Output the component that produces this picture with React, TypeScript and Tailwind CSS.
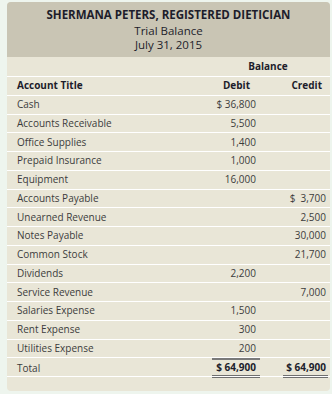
const rows: [string, string, string][] = [
  ["Cash", "$ 36,800", ""],
  ["Accounts Receivable", "5,500", ""],
  ["Office Supplies", "1,400", ""],
  ["Prepaid Insurance", "1,000", ""],
  ["Equipment", "16,000", ""],
  ["Accounts Payable", "", "$  3,700"],
  ["Unearned Revenue", "", "2,500"],
  ["Notes Payable", "", "30,000"],
  ["Common Stock", "", "21,700"],
  ["Dividends", "2,200", ""],
  ["Service Revenue", "", "7,000"],
  ["Salaries Expense", "1,500", ""],
  ["Rent Expense", "300", ""],
  ["Utilities Expense", "200", ""],
];

const grid = "grid grid-cols-[1fr_48px_45px] gap-x-[23px] pl-[10px] pr-[2px] items-center";

export default function App() {
  return (
    <div className="w-[332px] h-[394px] bg-[#eef5ee] pt-[2px] pl-[7px] pr-[2px] font-['Open_Sans',sans-serif]">
      <div className="h-[389px] rounded-[4px] overflow-hidden bg-[#e9e6d7] text-[10px] text-[#3c3c3c] whitespace-nowrap">
        <div className="h-[55px] bg-[#c9c5b4] flex flex-col items-center pt-[5px] text-[11.5px] text-[#1d1d2b]">
          <div className="font-bold leading-[16px]">SHERMANA PETERS, REGISTERED DIETICIAN</div>
          <div className="leading-[15px]">Trial Balance</div>
          <div className="leading-[13px]">July 31, 2015</div>
        </div>
        <div className={`${grid} h-[20px] border-b border-white font-bold text-[#1d1d2b]`}>
          <div />
          <div className="col-span-2 text-center pr-[4px]">Balance</div>
        </div>
        <div className={`${grid} h-[18.75px] border-b border-white font-bold text-[#1d1d2b]`}>
          <div>Account Title</div>
          <div className="text-right pr-[10px]">Debit</div>
          <div className="text-right pr-[6px]">Credit</div>
        </div>
        {rows.map(([name, debit, credit]) => (
          <div key={name} className={`${grid} h-[18.75px] border-b border-white`}>
            <div>{name}</div>
            <div className="text-right pr-[4px] whitespace-pre">{debit}</div>
            <div className="text-right pr-[2px] whitespace-pre">{credit}</div>
          </div>
        ))}
        <div className={`${grid} h-[18.75px] border-b border-white items-stretch`}>
          <div className="flex items-center">Total</div>
          <div className="flex flex-col">
            <div className="h-[2px] bg-[#7a7a7a]" />
            <div className="flex-1 flex items-center justify-end pr-[4px] font-bold text-[#1d1d2b]">$ 64,900</div>
            <div className="h-[1px] bg-[#6f6f6f] mb-[1px]" />
            <div className="h-[1px] bg-[#6f6f6f]" />
          </div>
          <div className="flex flex-col">
            <div className="h-[2px] bg-transparent" />
            <div className="flex-1 flex items-center justify-end pr-[2px] font-bold text-[#1d1d2b]">$ 64,900</div>
            <div className="h-[1px] bg-[#6f6f6f] mb-[1px]" />
            <div className="h-[1px] bg-[#6f6f6f]" />
          </div>
        </div>
      </div>
    </div>
  );
}
